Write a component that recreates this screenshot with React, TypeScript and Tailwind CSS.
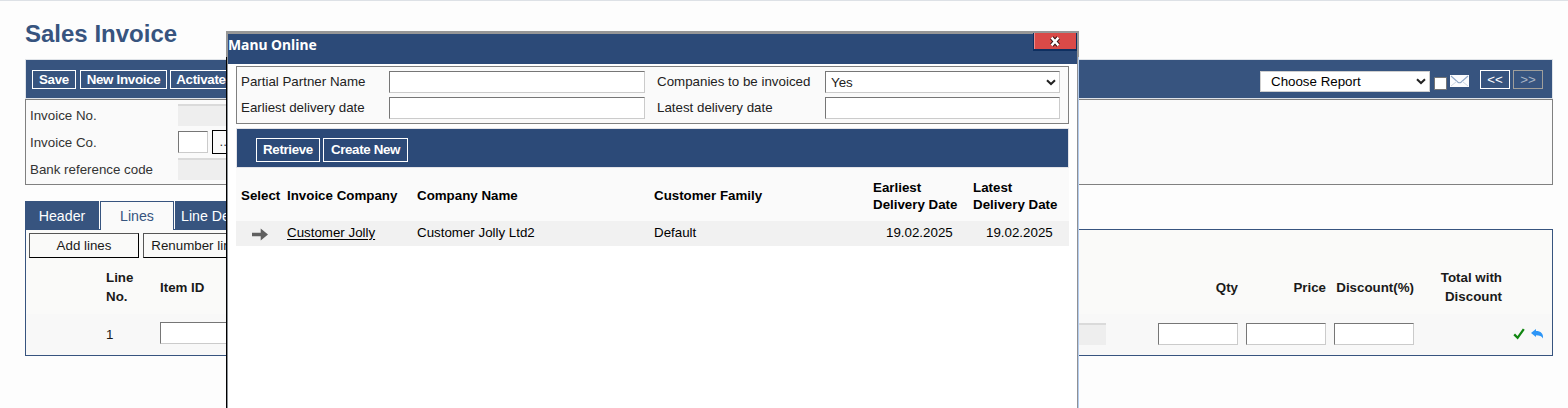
import type { ReactNode } from "react";
import clsx from "clsx";

const FONT = "font-['Liberation_Sans',Arial,sans-serif]";

type Row = {
  company: string;
  name: string;
  family: string;
  earliest: string;
  latest: string;
};

const ROWS: Row[] = [
  { company: "Customer Jolly", name: "Customer Jolly Ltd2", family: "Default", earliest: "19.02.2025", latest: "19.02.2025" },
];

function Field({ className, disabled }: { className?: string; disabled?: boolean }) {
  return (
    <input
      type="text"
      disabled={disabled}
      className={clsx(
        "block h-[22px] shrink-0 px-1 outline-none",
        disabled
          ? "border-t-2 border-[#dadada] bg-[#eeeeee]"
          : "border border-t-[#767676] border-l-[#767676] border-r-[#cbcbcb] border-b-[#cbcbcb] bg-white",
        className,
      )}
    />
  );
}

function BarButton({ children, className, disabled }: { children: ReactNode; className?: string; disabled?: boolean }) {
  return (
    <button
      disabled={disabled}
      className={clsx(
        "flex shrink-0 items-center justify-center border whitespace-nowrap",
        disabled ? "border-[#a09f9b] text-[#a9b4c5]" : "border-white text-white",
        className,
      )}
    >
      {children}
    </button>
  );
}

function Chevron({ className }: { className: string }) {
  return (
    <svg viewBox="0 0 10 7" className={clsx("pointer-events-none absolute h-[7px] w-[10px]", className)}>
      <path d="M1 1.2 L5 5 L9 1.2" fill="none" stroke="#222" strokeWidth="2" />
    </svg>
  );
}

function MailIcon() {
  return (
    <svg viewBox="0 0 19 12" className="h-3 w-[19px] shrink-0">
      <rect width="19" height="12" fill="#fbfcfe" />
      <path d="M1 1 L8 7.2 Q9.5 8.2 11 7.2 L18 1" fill="none" stroke="#8fa6c6" strokeWidth="1.1" />
      <path d="M1 11 L6.8 6.3 M18 11 L12.2 6.3" fill="none" stroke="#ccd6e4" strokeWidth="1" />
    </svg>
  );
}

function Toolbar() {
  return (
    <div className="flex h-10 border border-[#dfe3e8] bg-[#37547f] pt-2.5 pr-[9px] pl-1.5">
      <BarButton className="h-[19px] w-11 font-bold tracking-[-0.3px]">Save</BarButton>
      <BarButton className="ml-1 h-[19px] w-[87px] font-bold tracking-[-0.3px]">New Invoice</BarButton>
      <BarButton className="ml-[3px] h-[19px] w-[62px] font-bold tracking-[-0.3px]">Activate</BarButton>
      <div className="ml-auto flex">
        <div className="relative mt-px h-[21px] w-[170px]">
          <select className="block h-full w-full appearance-none border border-[#cfcfcf] bg-white pl-2.5 text-black">
            <option>Choose Report</option>
          </select>
          <Chevron className="top-[7px] right-1" />
        </div>
        <span className="mt-[7px] ml-1 h-[13px] w-[13px] rounded-[1px] border border-[#767676] bg-white" />
        <div className="mt-[5px] ml-[3px]">
          <MailIcon />
        </div>
        <BarButton className="ml-[11px] h-[19px] w-[30px]">&lt;&lt;</BarButton>
        <BarButton disabled className="ml-[3px] h-[19px] w-[30px]">&gt;&gt;</BarButton>
      </div>
    </div>
  );
}

function InvoiceForm() {
  return (
    <div className="flex h-[86px] flex-col gap-[5px] border border-[#808080] bg-[#fafafa] pt-1 pl-1 text-[#333]">
      <div className="flex h-[22px] items-center">
        <label className="w-[148px] pt-0.5">Invoice No.</label>
        <Field disabled className="w-[120px]" />
      </div>
      <div className="flex h-[22px] items-center">
        <label className="w-[148px] pt-0.5">Invoice Co.</label>
        <Field className="w-[30px]" />
        <button className="ml-1 h-6 w-[26px] shrink-0 border border-black bg-[#fafafa]">...</button>
      </div>
      <div className="flex h-[22px] items-center">
        <label className="w-[148px] pt-0.5">Bank reference code</label>
        <Field disabled className="w-[120px]" />
      </div>
    </div>
  );
}

function Lines() {
  return (
    <>
      <div className="mt-4 flex h-7 text-[14.2px]">
        <button className="h-7 w-[74px] bg-[#37547f] pt-[3px] text-white">Header</button>
        <button className="z-10 ml-px h-[29px] w-[74px] border border-b-0 border-[#37547f] bg-[#fafafa] pt-0.5 text-[#37547f]">
          Lines
        </button>
        <button className="ml-px h-7 w-[96px] bg-[#37547f] pt-[3px] pl-1.5 text-left text-white">Line Details</button>
      </div>
      <div className="h-[127px] border border-[#37547f] bg-[#fafaf9] text-[#1a1a1a]">
        <div className="flex gap-1 pt-[3px] pl-[3px]">
          <button className="h-[25px] w-[110px] border border-t-[#555] border-r-black border-b-black border-l-[#555]">
            Add lines
          </button>
          <button className="h-[25px] w-[110px] border border-t-[#555] border-r-black border-b-black border-l-[#555]">
            Renumber lines
          </button>
        </div>
        <div className="flex h-14 items-center pt-0.5 pr-[50px] pl-20 leading-[19px] font-bold">
          <div className="w-[54px] pr-4">Line No.</div>
          <div>Item ID</div>
          <div className="ml-auto w-20 text-right">Qty</div>
          <div className="ml-2 w-20 text-right">Price</div>
          <div className="ml-2 w-20 text-right">Discount(%)</div>
          <div className="ml-2 w-20 text-right">Total with Discount</div>
        </div>
        <div className="flex h-[41px] items-center bg-[#f8f8f8] pr-2 pb-0.5 pl-20">
          <div className="w-[54px] pt-0.5">1</div>
          <Field className="-mt-0.5 w-[120px]" />
          <Field disabled className="ml-auto w-[106px]" />
          <Field className="ml-[52px] w-20" />
          <Field className="ml-2 w-20" />
          <Field className="ml-2 w-20" />
          <svg viewBox="0 0 12 12" className="ml-[99px] h-3 w-3 shrink-0">
            <path d="M1.2 6.4 L4.6 9.8 L10.8 1.2" fill="none" stroke="#118611" strokeWidth="2.3" />
          </svg>
          <svg viewBox="0 0 13 10" className="ml-[6px] h-2.5 w-[13px] shrink-0">
            <path d="M0 4 L5 0 V2 C9.8 2 12.6 4.6 12 9.6 C10.8 6.9 8.6 6.2 5 6.2 V8 Z" fill="#2e96f7" />
          </svg>
        </div>
      </div>
    </>
  );
}

function CompanyDialog() {
  return (
    <div className="absolute top-[30px] left-[226px] flex h-[378px] w-[853px]">
      {/* left window edge */}
      <div className="flex w-0.5 flex-col">
        <div className="h-[26px] bg-[#979797]" />
        <div className="flex-1 border-r border-l border-r-[#8d9196] border-l-black" />
      </div>
      <div className="flex min-w-0 flex-1 flex-col bg-white">
        <div className="relative h-[33px] border-t-[3px] border-[#979797] bg-[#2c4a78]">
          <div className="pt-px font-['Noto_Sans','Open_Sans',sans-serif] text-[13.9px] leading-5 font-bold text-white">
            Manu Online
          </div>
          <button className="absolute -top-px right-0 flex h-[18px] w-11 items-center justify-center border-r border-b-2 border-l border-[#0e2f60] bg-[#d94a48] shadow-[inset_1px_0_0_#eb8d8b]">
            <svg viewBox="0 0 12 11" className="h-[11px] w-3">
              <path d="M2.8 1.8 L9.2 9.2 M9.2 1.8 L2.8 9.2" stroke="#301010" strokeWidth="4.4" />
              <path d="M2.6 1.6 L9.4 9.4 M9.4 1.6 L2.6 9.4" stroke="#fff" strokeWidth="2.4" />
            </svg>
          </button>
        </div>

        <div className="px-2 pt-0.5">
          <div className="grid h-[58px] w-[833px] grid-cols-[148px_268px_168px_235px] grid-rows-[22px_22px] items-center gap-y-1 border border-[#808080] bg-[#fafafa] pt-1 pl-1 text-[#222]">
            <label>Partial Partner Name</label>
            <Field className="w-64" />
            <label>Companies to be invoiced</label>
            <div className="relative h-[22px]">
              <select className="block h-full w-full appearance-none border border-t-[#767676] border-r-[#cbcbcb] border-b-[#cbcbcb] border-l-[#767676] bg-white pt-px pl-[5px]">
                <option>Yes</option>
              </select>
              <Chevron className="top-2 right-1" />
            </div>
            <label>Earliest delivery date</label>
            <Field className="w-64" />
            <label>Latest delivery date</label>
            <Field className="w-full" />
          </div>

          <div className="mt-1 flex h-10 w-[833px] gap-[3px] border border-[#e3e3e8] bg-[#2c4a78] pt-[9px] pl-[19px]">
            <BarButton className="h-6 w-16 font-bold tracking-[-0.35px]">Retrieve</BarButton>
            <BarButton className="h-6 w-[85px] font-bold tracking-[-0.35px]">Create New</BarButton>
          </div>

          <table className="w-[833px] table-fixed border-collapse text-left text-black">
            <thead>
              <tr className="h-[53px] bg-[#fafafa] leading-[17px]">
                <th className="w-[51px] pt-0.5 pl-[5px]">Select</th>
                <th className="w-[130px] pt-0.5">Invoice Company</th>
                <th className="w-[237px] pt-0.5">Company Name</th>
                <th className="w-[219px] pt-0.5">Customer Family</th>
                <th className="w-[100px] pt-0.5">Earliest<br />Delivery Date</th>
                <th className="pt-0.5">Latest<br />Delivery Date</th>
              </tr>
            </thead>
            <tbody>
              {ROWS.map((r) => (
                <tr key={r.company} className="h-[25px] bg-[#f1f1f1] leading-5">
                  <td className="pl-4">
                    <svg viewBox="0 0 16 13" className="mt-px h-[13px] w-4">
                      <path d="M0 4.7 H8.7 V0.4 L16 6.5 L8.7 12.6 V8.3 H0 Z" fill="#606060" />
                    </svg>
                  </td>
                  <td className="pb-0.5"><a className="underline underline-offset-2">{r.company}</a></td>
                  <td className="pb-0.5">{r.name}</td>
                  <td className="pb-0.5">{r.family}</td>
                  <td className="pb-0.5 pl-[13px]">{r.earliest}</td>
                  <td className="pb-0.5 pl-[13px]">{r.latest}</td>
                </tr>
              ))}
            </tbody>
          </table>
        </div>
      </div>
      {/* right window edge */}
      <div className="flex w-0.5 flex-col">
        <div className="h-[26px] bg-[#979797]" />
        <div className="flex-1 border-r border-l border-r-[#b4cdee] border-l-[#8f9094]" />
      </div>
    </div>
  );
}

export default function App() {
  return (
    <div className={clsx("relative h-[408px] w-[1568px] overflow-hidden border-t border-[#dde1e6] bg-[#fdfdfd] text-[13.33px]", FONT)}>
      <div className="pr-[15px] pl-[25px]">
        <h1 className="h-[58px] pt-[17px] text-2xl font-bold text-[#37547f]">Sales Invoice</h1>
        <Toolbar />
        <InvoiceForm />
        <Lines />
      </div>
      <CompanyDialog />
    </div>
  );
}
